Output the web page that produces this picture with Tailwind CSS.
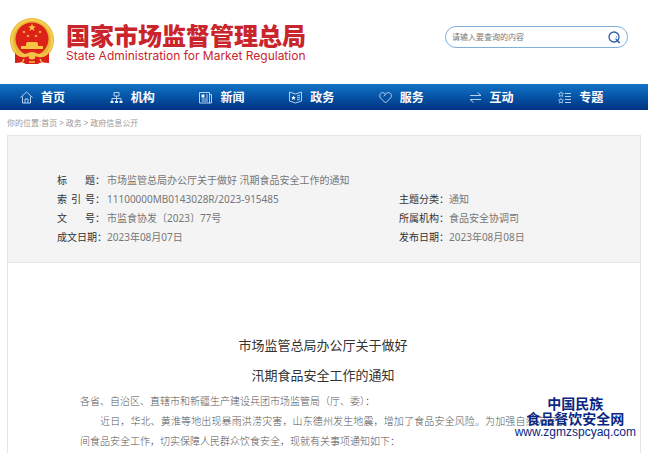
<!DOCTYPE html>
<html lang="zh-CN">
<head>
  <meta charset="UTF-8" />
  <meta name="viewport" content="width=device-width, initial-scale=1.0" />
  <title>国家市场监督管理总局</title>
  <script src="https://cdn.jsdelivr.net/npm/@tailwindcss/browser@4"></script>
</head>
<body class="relative flex min-h-screen flex-col bg-white font-['Noto_Sans','Noto_Sans_CJK_SC',sans-serif] text-[#444]">

  <header class="flex h-[84px] items-start justify-between pl-2 pr-5">
    <a href="#" class="flex items-start gap-3 pt-4 text-[#c9252b]">
      <svg viewBox="0 0 46 50" class="h-[50px] w-[46px] shrink-0">
        <path d="M8 33 L7 47 L14 46 L18 48 H29 L34 46 L41 47 L40 33 Z" fill="#d91f1c" />
        <circle cx="24" cy="24" r="22" fill="#e9b637" />
        <circle cx="24" cy="24" r="20" fill="none" stroke="#f6d052" stroke-width="2" />
        <circle cx="24" cy="23" r="16.500" fill="#dc2119" />
        <path d="M24 7.500 l1 2.800 h2.900 l-2.300 1.800 .9 2.900 -2.500-1.700 -2.500 1.700 .9-2.900 -2.300-1.800 h2.900z" fill="#f8c83c" />
        <g fill="#f2a436">
          <circle cx="16" cy="16" r="1.300" /><circle cx="32" cy="16" r="1.300" />
          <circle cx="20" cy="20" r="1.300" /><circle cx="28" cy="20" r="1.300" />
        </g>
        <path d="M18 28 L19 26 H29 L30 28 V30 H35 V33 H13 V30 H18Z" fill="#f5c644" />
        <path d="M7 36 Q15 44 20 38 Q24 34 28 38 Q33 44 41 36 L41 47 L34 46 L29 48 H19 L14 46 L7 47Z" fill="#d91f1c" />
        <path d="M5 33 Q14 40 20 37 Q24 35 28 37 Q34 40 43 33 Q39 43 30 41 Q24 38 18 41 Q9 43 5 33Z" fill="#f2c145" />
        <circle cx="24" cy="40" r="3.500" fill="#f2c145" />
        <path d="M16 43 L14 47 M32 43 L34 47 M21 46 H27" stroke="#f2c145" stroke-width="1.500" />
      </svg>
      <span class="flex flex-col pt-1.5">
        <span class="text-[24px] font-black leading-7">国家市场监督管理总局</span>
        <span class="font-['Inter',sans-serif] text-[12px] leading-3">State Administration for Market Regulation</span>
      </span>
    </a>

    <form class="mt-[26px] flex h-[22px] w-[183px] items-center rounded-full border border-[#7fb0dc] pl-1.5 pr-1.5">
      <input type="search" aria-label="搜索" placeholder="请输入要查询的内容"
             class="min-w-0 flex-1 bg-transparent text-[8px] leading-4 placeholder:text-[#777] focus:outline-none" />
      <button type="button" aria-label="查询" class="shrink-0">
        <svg viewBox="0 0 14 14" class="h-3.5 w-3.5" fill="none" stroke="#2a5da8">
          <circle cx="7" cy="7" r="5" stroke-width="1.300" />
          <path d="M9 9.300 L12.700 13" stroke-width="1.600" />
          <path d="M9.500 6 A3 3 0 0 1 7.500 9.500" stroke="#8fb4e0" />
        </svg>
      </button>
    </form>
  </header>

  <nav class="h-[26px] bg-linear-to-b from-[#1274c6] to-[#033384] pl-5 text-[12px] font-bold text-white">
    <ul class="grid h-full grid-cols-7">
      <li>
        <a href="#" class="flex h-full items-center gap-2 pt-px">
          <svg viewBox="0 0 13 13" class="h-[13px] w-[13px]" fill="none" stroke="#b5d3f1"><path d="M.5 6.500 L6.500 1 L12.500 6.500 M2.500 5.500 V12 H10.500 V5.500 M5 12 V8 H8 V12" /></svg>
          首页
        </a>
      </li>
      <li>
        <a href="#" class="flex h-full items-center gap-2 pt-px">
          <svg viewBox="0 0 13 13" class="h-[13px] w-[13px]" fill="none" stroke="#b5d3f1"><path d="M4 1.500 H9 V5 H4Z M6.500 5 V10 M2 10 V7.500 H11 V10" /><path d="M.5 11 H3.500 M5 11 H8 M9.500 11 H12.500" stroke="#e4f0fc" stroke-width="2" /></svg>
          机构
        </a>
      </li>
      <li>
        <a href="#" class="flex h-full items-center gap-2 pt-px">
          <svg viewBox="0 0 13 13" class="h-[13px] w-[13px]" fill="none" stroke="#b5d3f1"><path d="M.5 1.500 H10.500 V12 H.5Z M10.500 3.500 H12.500 V12 H10 M7 4 H9 M7 6 H9 M2.500 8 H9 M2.500 10 H9" /><path d="M2.500 3.500 H5.500 V6.500 H2.500Z" fill="#fff" stroke="none" /></svg>
          新闻
        </a>
      </li>
      <li>
        <a href="#" class="flex h-full items-center gap-2 pt-px">
          <svg viewBox="0 0 13 13" class="h-[13px] w-[13px]" fill="none" stroke="#b5d3f1"><path d="M.5 1 L6.500 3 L12.500 1 V10 L6.500 12 L.5 10Z M8 5 L11 4 M8 7 L11 6 M8 9 L11 8" /><path d="M4.500 4.500 l.7 1.500 1.500 .2 -1.100 1.100 .3 1.600 -1.400 -.8 -1.400 .8 .3 -1.600 -1.100 -1.100 1.500 -.2z" fill="#fff" stroke="none" /></svg>
          政务
        </a>
      </li>
      <li>
        <a href="#" class="flex h-full items-center gap-2 pt-px">
          <svg viewBox="0 0 13 13" class="h-[13px] w-[13px]" fill="none" stroke="#b5d3f1"><path d="M6.500 12 L1.500 7 C-.5 4.500 1.500 1.200 4.300 1.700 C5.700 2 6.500 3.200 6.500 3.200 C7.300 2 8.500 1.500 9.700 1.700 C12.500 2.200 13.300 5 11.500 7Z" /><path d="M6.500 3.200 L4.800 5.300" /></svg>
          服务
        </a>
      </li>
      <li>
        <a href="#" class="flex h-full items-center gap-2 pt-px">
          <svg viewBox="0 0 13 13" class="h-[13px] w-[13px]" fill="none" stroke="#b5d3f1"><path d="M1 4.500 H12 L8.500 1.500 M12 8.500 H1 L4.500 11.500" /></svg>
          互动
        </a>
      </li>
      <li>
        <a href="#" class="flex h-full items-center gap-2 pt-px">
          <svg viewBox="0 0 13 13" class="h-[13px] w-[13px]" fill="none" stroke="#b5d3f1"><path d="M7 2.500 H13 M7 5.500 H13 M7 8.500 H13 M7 11.500 H13" /><path d="M3 .8 L3.700 2.300 L5.500 2.500 L4.200 3.700 L4.500 5.500 L3 4.600 L1.500 5.500 L1.800 3.700 L.5 2.500 L2.300 2.300Z M3 7.300 L3.700 8.800 L5.500 9 L4.200 10.200 L4.500 12 L3 11.100 L1.500 12 L1.800 10.200 L.5 9 L2.300 8.800Z" stroke-width=".8" /></svg>
          专题
        </a>
      </li>
    </ul>
  </nav>

  <div class="flex h-[25px] items-center gap-0.5 px-[7px] text-[8px] text-[#999]">
    <span>你的位置:<a href="#">首页</a></span>
    <span>&gt;</span>
    <a href="#">政务</a>
    <span>&gt;</span>
    <a href="#">政府信息公开</a>
  </div>

  <main class="mx-[7px] flex flex-1 flex-col border-x border-t border-[#e4e5ec]">
    <dl class="grid grid-cols-[342px_1fr] border-b border-[#e4e5e8] bg-[#f4f4f4] pb-[15px] pl-[49px] pt-[35px] text-[10px] leading-[19px] text-[#777]">
      <div class="col-span-2 flex gap-0.5">
        <dt class="flex w-12 justify-between text-[#333]"><span>标</span><span>题：</span></dt>
        <dd>市场监管总局办公厅关于做好 汛期食品安全工作的通知</dd>
      </div>
      <div class="flex gap-0.5">
        <dt class="flex w-12 justify-between text-[#333]"><span>索</span><span>引</span><span>号：</span></dt>
        <dd>11100000MB0143028R/2023-915485</dd>
      </div>
      <div class="flex">
        <dt class="text-[#333]">主题分类：</dt>
        <dd>通知</dd>
      </div>
      <div class="flex gap-0.5">
        <dt class="flex w-12 justify-between text-[#333]"><span>文</span><span>号：</span></dt>
        <dd>市监食协发〔2023〕77号</dd>
      </div>
      <div class="flex">
        <dt class="text-[#333]">所属机构：</dt>
        <dd>食品安全协调司</dd>
      </div>
      <div class="flex">
        <dt class="text-[#333]">成文日期：</dt>
        <dd>2023年08月07日</dd>
      </div>
      <div class="flex">
        <dt class="text-[#333]">发布日期：</dt>
        <dd>2023年08月08日</dd>
      </div>
    </dl>

    <article class="pl-[72px] pr-[74px] pt-[67px]">
      <h1 class="text-center text-[13px] leading-[30px] text-[#333]">市场监管总局办公厅关于做好<br />汛期食品安全工作的通知</h1>
      <div class="pt-0.5 text-justify font-['Liberation_Serif','Noto_Sans_CJK_SC',serif] text-[10px] font-light leading-5 text-[#555]">
        <p>各省、自治区、直辖市和新疆生产建设兵团市场监管局（厅、委）：</p>
        <p class="indent-5">近日，华北、黄淮等地出现暴雨洪涝灾害，山东德州发生地震，增加了食品安全风险。为加强自然灾害期间食品安全工作，切实保障人民群众饮食安全，现就有关事项通知如下：</p>
      </div>
    </article>
  </main>

  <!-- watermark -->
  <div class="absolute bottom-4 right-3 text-center font-['Liberation_Sans','Noto_Sans_CJK_SC',sans-serif] text-[#0b2783]">
    <p class="text-[14px] font-bold leading-[15px]">中国民族<br />食品餐饮安全网</p>
    <p class="text-[12px] leading-2.5">www.zgmzspcyaq.com</p>
  </div>
</body>
</html>
